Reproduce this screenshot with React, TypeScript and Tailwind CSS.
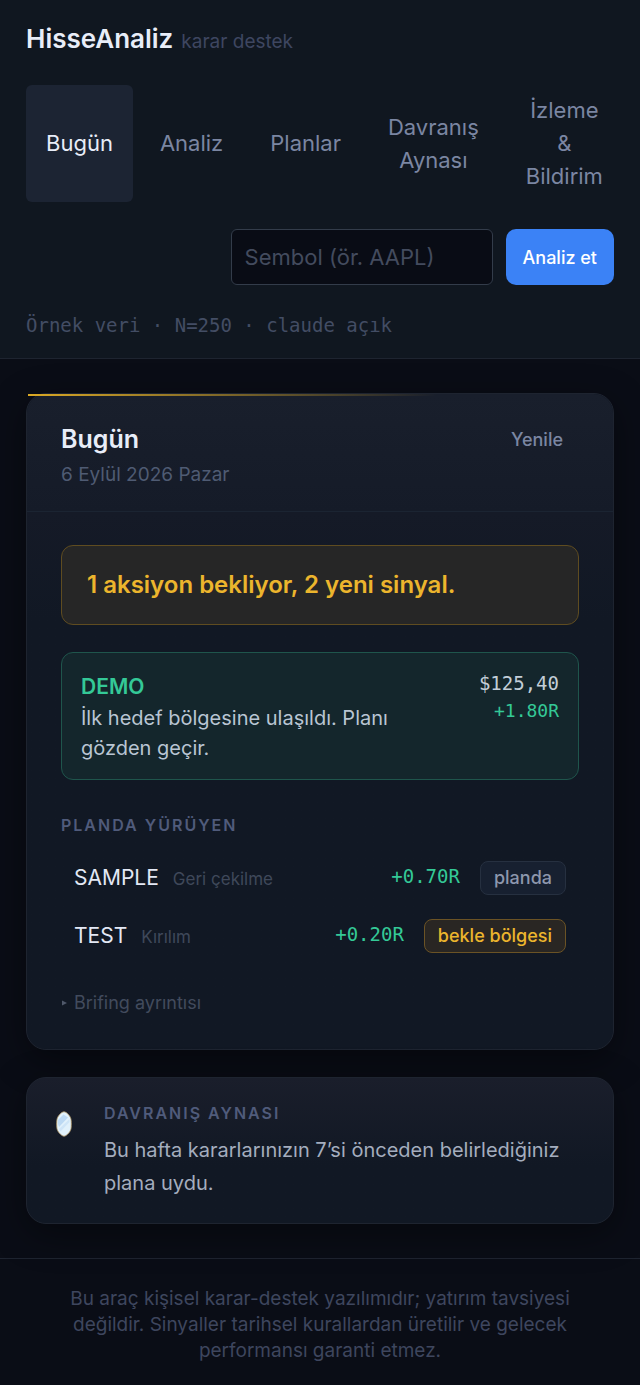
import { clsx } from "clsx"

const NAV_ITEMS = ["Bugün", "Analiz", "Planlar", "Davranış Aynası", "İzleme & Bildirim"]

type Plan = {
  symbol: string
  setup: string
  result: string
  status: string
  waiting: boolean
}

const PLANS: Plan[] = [
  { symbol: "SAMPLE", setup: "Geri çekilme", result: "+0.70R", status: "planda", waiting: false },
  { symbol: "TEST", setup: "Kırılım", result: "+0.20R", status: "bekle bölgesi", waiting: true },
]

const CARD =
  "relative rounded-[20px] border border-[#1e2430] bg-[#111824] shadow-[0_10px_36px_rgba(0,0,0,0.4)]"
const MONO = "font-['DejaVu_Sans_Mono',monospace]"
const LABEL = "text-[16px] leading-5 font-semibold tracking-[2px] text-[#505b7b]"

function Header() {
  return (
    <header className="flex flex-col gap-[27px] border-b border-[#1e2430] bg-[#101720] px-[26px] pt-[23px] pb-5">
      <div className="flex items-baseline gap-2 leading-8">
        <span className="text-[26px] font-semibold text-[#e8edf8]">HisseAnaliz</span>
        <span className="text-[19px] text-[#3e4660]">karar destek</span>
      </div>

      <nav className="flex gap-[7px]">
        {NAV_ITEMS.map((item, i) => (
          <button
            key={item}
            type="button"
            className={clsx(
              "rounded-md px-5 py-[9px] text-[22px] leading-[33px]",
              i === 0 ? "bg-[#1c2433] text-[#e8edf8]" : "text-[#7b86a2]"
            )}
          >
            {item}
          </button>
        ))}
      </nav>

      <form className="flex justify-end gap-[13px]" onSubmit={(e) => e.preventDefault()}>
        <input
          type="text"
          aria-label="Sembol"
          placeholder="Sembol (ör. AAPL)"
          className="h-14 w-[262px] min-w-0 rounded-md border border-[#333c4a] bg-[#090c15] px-[13px] text-[22px] text-[#e8edf8] placeholder:text-[#434b5e]"
        />
        <button
          type="submit"
          className="h-14 rounded-[10px] bg-[#3b82f6] px-[17px] text-[18px] font-medium whitespace-nowrap text-white"
        >
          Analiz et
        </button>
      </form>

      <p className={clsx(MONO, "text-[19px] leading-[26px] text-[#434d64]")}>
        Örnek veri · N=250 · claude açık
      </p>
    </header>
  )
}

function ActionCard() {
  return (
    <div className="mt-[27px] flex items-start justify-between gap-5 rounded-xl border border-[#1f554c] bg-[#14262c] px-[19px] pt-[18px] pb-4">
      <div className="min-w-0">
        <h3 className="text-[21px] leading-8 font-semibold text-[#34c997]">DEMO</h3>
        <p className="text-[20px] leading-[30px] text-[#b9c5d3]">
          İlk hedef bölgesine ulaşıldı. Planı gözden geçir.
        </p>
      </div>
      <div className={clsx(MONO, "shrink-0 text-right")}>
        <div className="text-[19px] leading-6 text-[#c3ced8]">$125,40</div>
        <div className="text-[18px] leading-8 text-[#34c997]">+1.80R</div>
      </div>
    </div>
  )
}

function PlanRow({ plan }: { plan: Plan }) {
  return (
    <li className="flex h-[58px] items-center justify-between px-[13px]">
      <div className="flex items-baseline gap-[14px]">
        <span className="text-[21px] text-[#e3e8f5]">{plan.symbol}</span>
        <span className="text-[17px] text-[#3f485a]">{plan.setup}</span>
      </div>
      <div className="flex items-center gap-5">
        <span className={clsx(MONO, "pb-1 text-[19px] leading-6 text-[#34c997]")}>
          {plan.result}
        </span>
        <span
          className={clsx(
            "rounded-lg border px-[13px] text-[18px] leading-8 font-medium",
            plan.waiting
              ? "border-[#6b5325] bg-[#292623] text-[#ecb52d]"
              : "border-[#263040] bg-[#172030] text-[#8d97ad]"
          )}
        >
          {plan.status}
        </span>
      </div>
    </li>
  )
}

function TodayCard() {
  return (
    <section className={CARD}>
      <div className="absolute inset-x-px top-0 h-[2px] bg-linear-to-r from-[#dba925] to-transparent to-70%" />
      <div className="rounded-t-[20px] bg-linear-to-b from-[#191f2c] to-[#151b28]">
        <div className="flex items-start justify-between border-b border-[#1b2432] px-[34px] pt-[27px] pb-5">
          <div>
            <h2 className="text-[25px] leading-9 font-semibold text-[#e8edf8]">Bugün</h2>
            <p className="mt-[2px] text-[19px] leading-8 text-[#4f5b73]">6 Eylül 2026 Pazar</p>
          </div>
          <button
            type="button"
            className="px-4 py-[5px] text-[18px] leading-7 font-medium text-[#7b86a2]"
          >
            Yenile
          </button>
        </div>
      </div>

      <div className="rounded-b-[20px] bg-linear-to-b from-[#151a27] to-[#111824] to-20% px-[34px] pt-[33px] pb-8">
        <div className="rounded-xl border border-[#5f4c20] bg-[#262626] px-[25px] py-[21px] text-[24px] leading-9 font-semibold text-[#ecb52d]">
          1 aksiyon bekliyor, 2 yeni sinyal.
        </div>

        <ActionCard />

        <h3 className={clsx(LABEL, "mt-[35px]")}>PLANDA YÜRÜYEN</h3>
        <ul className="mt-[14px]">
          {PLANS.map((plan) => (
            <PlanRow key={plan.symbol} plan={plan} />
          ))}
        </ul>

        <button
          type="button"
          className="mt-6 flex items-center gap-[6px] text-[18px] leading-7 text-[#424b5d]"
        >
          <svg viewBox="0 0 7 6" className="w-[7px] fill-[#4f586a]" aria-hidden="true">
            <path d="M1 0.5 6 3 1 5.5Z" />
          </svg>
          Brifing ayrıntısı
        </button>
      </div>
    </section>
  )
}

function MirrorIcon() {
  return (
    <svg viewBox="0 0 16 26" className="mt-2 h-[26px] w-4 shrink-0" aria-hidden="true">
      <path
        d="M8 0.800C9.500 0.800 11 2 12.800 4C14.800 6.500 15.300 8 15.300 13C15.300 18 14.800 19.500 12.800 22C11 24 9.500 25.200 8 25.200C6.500 25.200 5 24 3.200 22C1.200 19.500 0.700 18 0.700 13C0.700 8 1.200 6.500 3.200 4C5 2 6.500 0.800 8 0.800Z"
        fill="#e1f1fb"
        stroke="#b39763"
        strokeWidth="0.8"
      />
      <path d="M2 13V9L7.500 3.500 12 6.500 3 16Z" fill="#bcd9f3" />
      <path d="M3 18 13.500 8V11L4.500 20.500Z" fill="#cfe5f7" />
    </svg>
  )
}

function MirrorCard() {
  return (
    <section
      className={clsx(
        CARD,
        "flex gap-8 bg-linear-to-b from-[#1a1e2b] to-[#111824] to-60% pt-[25px] pr-[34px] pb-[23px] pl-[29px]"
      )}
    >
      <MirrorIcon />
      <div>
        <h3 className={LABEL}>DAVRANIŞ AYNASI</h3>
        <p className="mt-[11px] text-[20px] leading-[33px] text-[#a4adbe]">
          Bu hafta kararlarınızın 7’si önceden belirlediğiniz plana uydu.
        </p>
      </div>
    </section>
  )
}

export default function App() {
  return (
    <div className="min-h-screen bg-[#0a0d16] font-['Inter',sans-serif]">
      <Header />
      <main className="flex flex-col gap-[27px] px-[26px] pt-[34px] pb-[34px]">
        <TodayCard />
        <MirrorCard />
      </main>
      <footer className="border-t border-[#1e2430] px-[52px] pt-[27px] pb-[21px] text-center text-[19px] leading-[26px] text-[#3e465e]">
        Bu araç kişisel karar-destek yazılımıdır; yatırım tavsiyesi değildir. Sinyaller tarihsel
        kurallardan üretilir ve gelecek performansı garanti etmez.
      </footer>
    </div>
  )
}
